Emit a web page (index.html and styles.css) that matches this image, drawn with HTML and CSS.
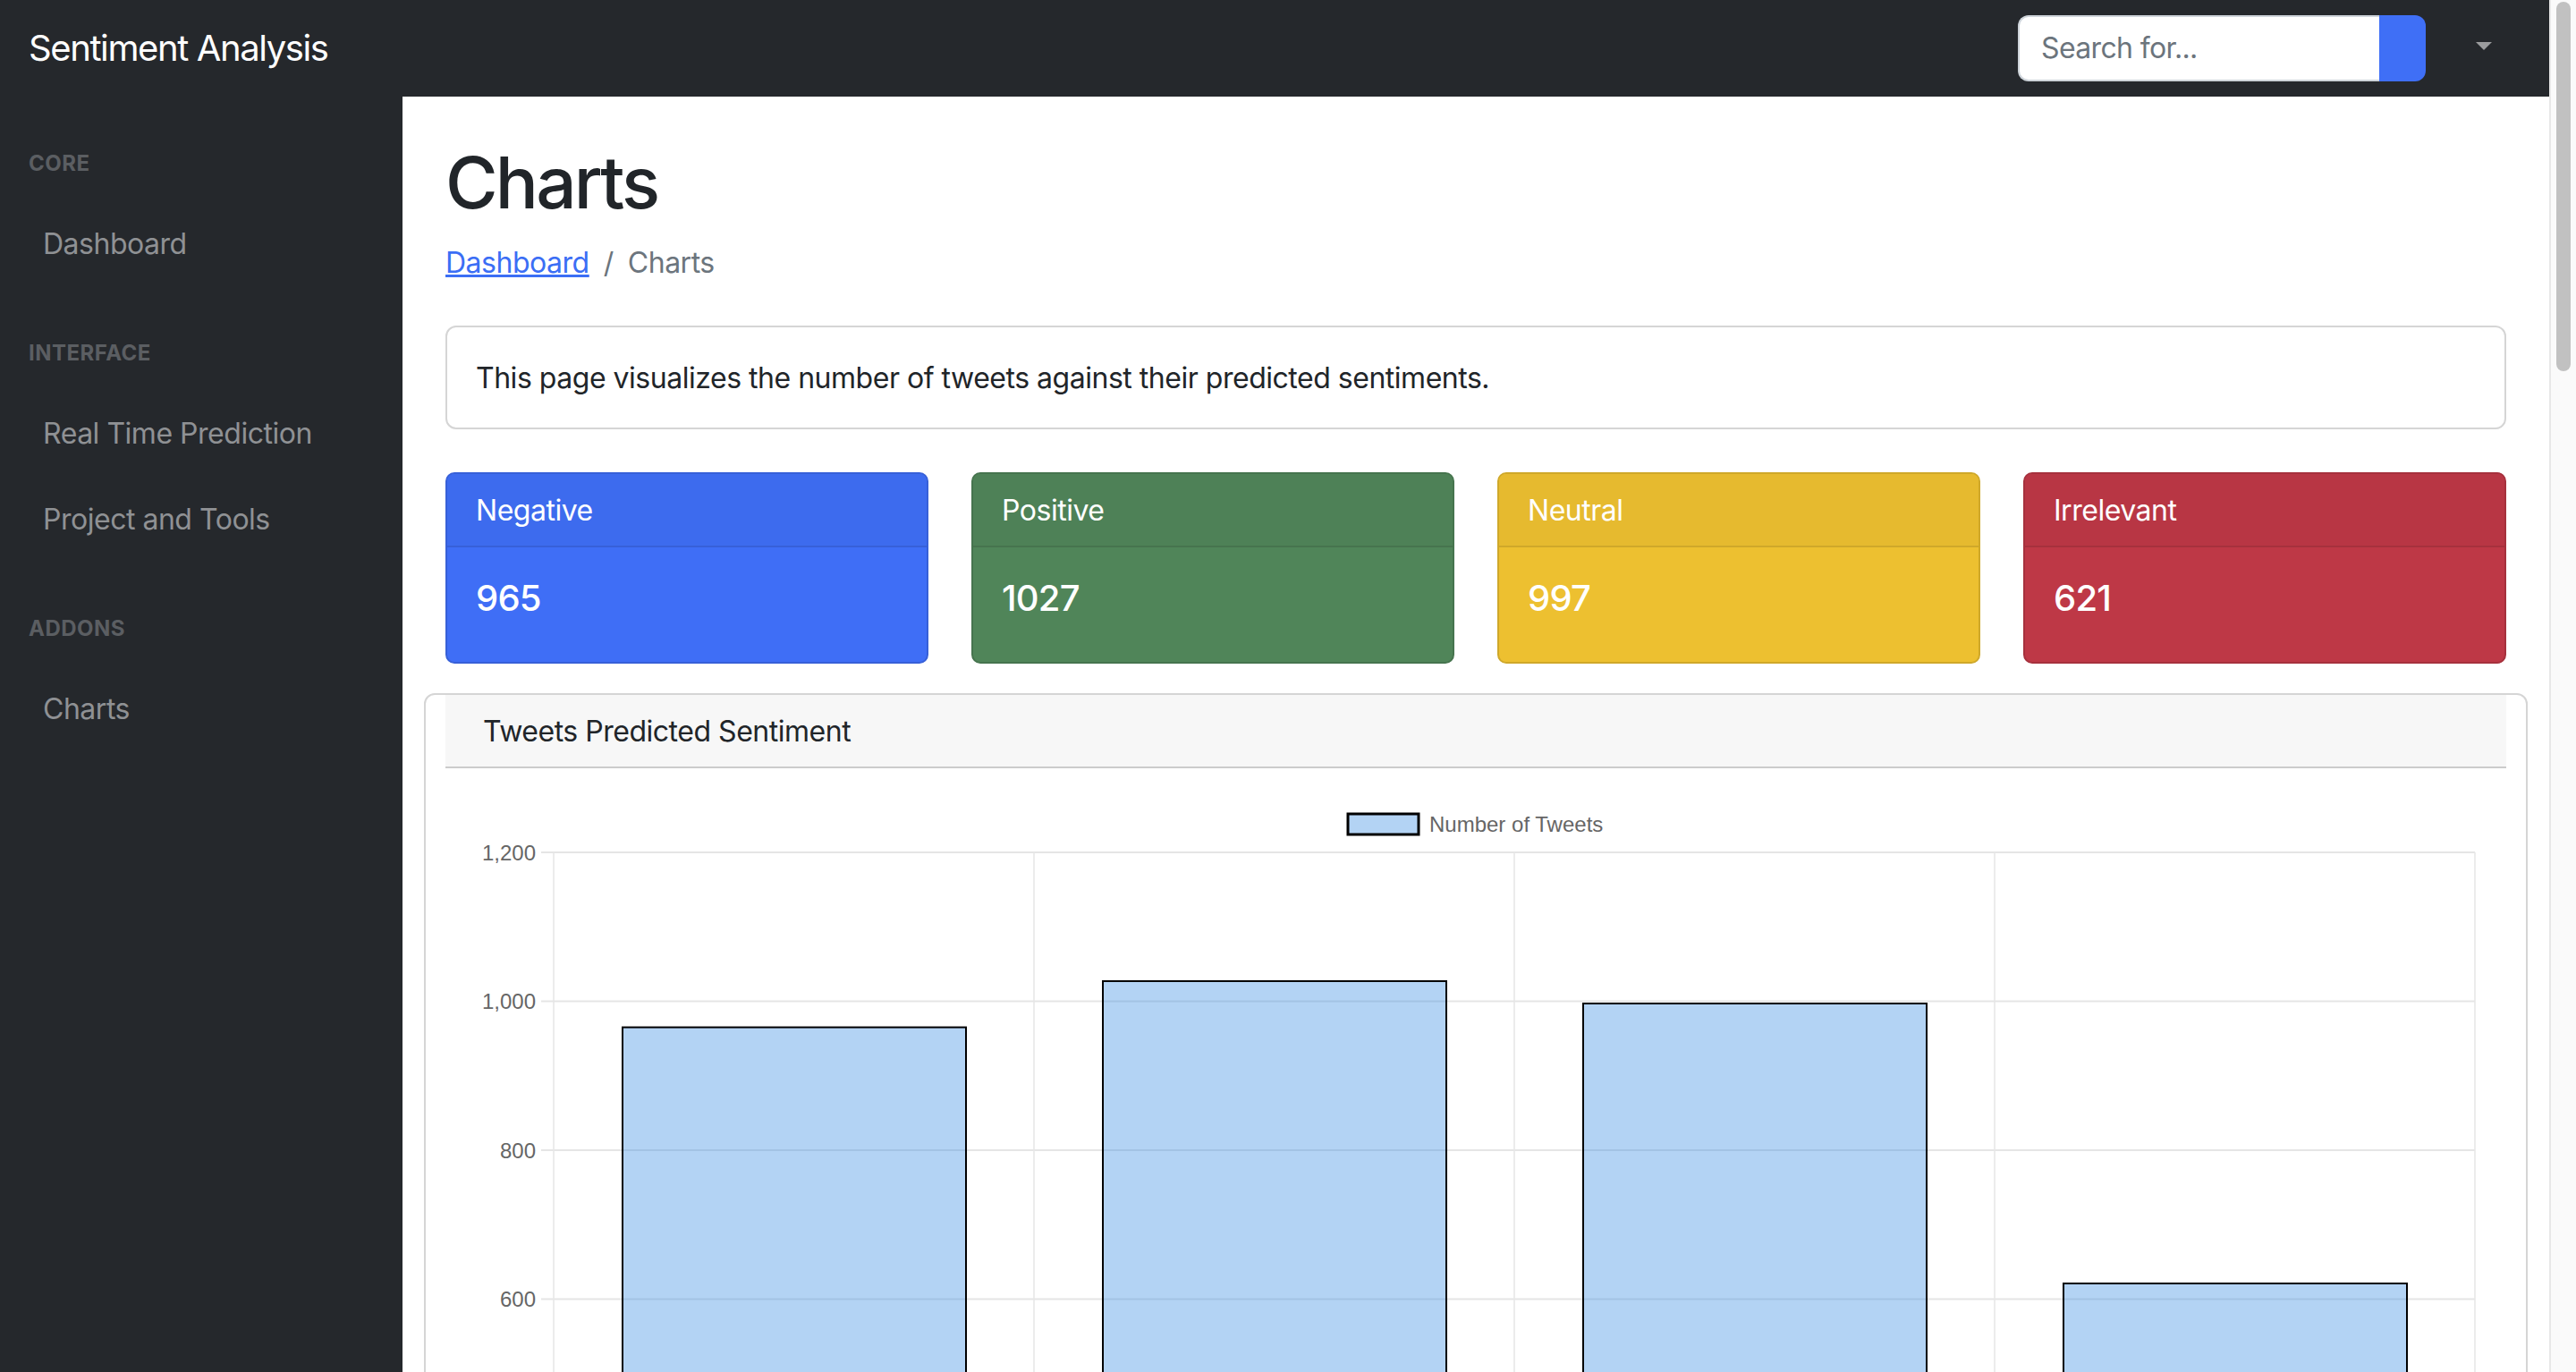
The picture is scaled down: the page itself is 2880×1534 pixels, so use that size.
FILE: index.html
```html
<!DOCTYPE html>
<html lang="en">
<head>
<meta charset="utf-8">
<title>Charts - Sentiment Analysis</title>
<link rel="stylesheet" href="styles.css">
</head>
<body>
<div class="page">
  <nav class="topnav">
    <a class="brand" href="#">Sentiment Analysis</a>
    <form class="search">
      <input class="search-input" type="text" placeholder="Search for...">
      <button class="search-btn" type="button" aria-label="Search"></button>
    </form>
    <a class="user-toggle" href="#" aria-label="User menu"><span class="caret"></span></a>
  </nav>
  <div class="layout">
    <nav class="sidenav">
      <div class="menu-heading">Core</div>
      <a class="menu-link" href="#">Dashboard</a>
      <div class="menu-heading">Interface</div>
      <a class="menu-link" href="#">Real Time Prediction</a>
      <a class="menu-link" href="#">Project and Tools</a>
      <div class="menu-heading">Addons</div>
      <a class="menu-link" href="#">Charts</a>
    </nav>
    <main class="content">
      <h1 class="title">Charts</h1>
      <ol class="breadcrumb">
        <li><a href="#">Dashboard</a></li>
        <li class="crumb-active">Charts</li>
      </ol>
      <div class="note">This page visualizes the number of tweets against their predicted sentiments.</div>
      <div class="stats">
        <div class="stat stat-negative">
          <div class="stat-header">Negative</div>
          <div class="stat-body"><h5 class="stat-value">965</h5></div>
        </div>
        <div class="stat stat-positive">
          <div class="stat-header">Positive</div>
          <div class="stat-body"><h5 class="stat-value">1027</h5></div>
        </div>
        <div class="stat stat-neutral">
          <div class="stat-header">Neutral</div>
          <div class="stat-body"><h5 class="stat-value">997</h5></div>
        </div>
        <div class="stat stat-irrelevant">
          <div class="stat-header">Irrelevant</div>
          <div class="stat-body"><h5 class="stat-value">621</h5></div>
        </div>
      </div>
      <div class="chart-card">
        <div class="chart-header">Tweets Predicted Sentiment</div>
        <div class="chart-body">
          <svg class="chart" width="2284" height="1080" viewBox="0 0 2284 1080">
            <g class="legend">
              <rect x="999" y="19" width="79" height="23" fill="rgba(54,140,225,0.38)" stroke="#000" stroke-width="3"/>
              <text class="legend-text" x="1090" y="38.5">Number of Tweets</text>
            </g>
            <g class="grid" stroke="#e5e5e5" stroke-width="2">
              <line x1="97" y1="62" x2="2259" y2="62"/>
              <line x1="97" y1="228.5" x2="2259" y2="228.5"/>
              <line x1="97" y1="395" x2="2259" y2="395"/>
              <line x1="97" y1="561.5" x2="2259" y2="561.5"/>
              <line x1="97" y1="728" x2="2259" y2="728"/>
              <line x1="97" y1="894.5" x2="2259" y2="894.5"/>
              <line x1="97" y1="1061" x2="2259" y2="1061"/>
            </g>
            <g class="grid-v" stroke="#e6e6e6" stroke-width="1.5">
              <line x1="111" y1="62" x2="111" y2="1075"/>
              <line x1="648" y1="62" x2="648" y2="1075"/>
              <line x1="1185" y1="62" x2="1185" y2="1075"/>
              <line x1="1722" y1="62" x2="1722" y2="1075"/>
              <line x1="2259" y1="62" x2="2259" y2="1075"/>
            </g>
            <g class="ylabels">
              <text x="91" y="70.5">1,200</text>
              <text x="91" y="237">1,000</text>
              <text x="91" y="403.5">800</text>
              <text x="91" y="570">600</text>
            </g>
            <g class="bars" fill="rgba(54,140,225,0.38)" stroke="#000" stroke-width="2">
              <rect x="188" y="257.6" width="384" height="803.4"/>
              <rect x="725" y="206" width="384" height="855"/>
              <rect x="1262" y="231" width="384" height="830"/>
              <rect x="1799" y="544" width="384" height="517"/>
            </g>
          </svg>
        </div>
      </div>
    </main>
  </div>
</div>
<div class="scrollbar"><div class="thumb"></div></div>
</body>
</html>
```

FILE: styles.css
```css
html, body {
  margin: 0;
  padding: 0;
  height: 100%;
  overflow: hidden;
}

body {
  display: flex;
  width: 2880px;
  height: 1534px;
  font-family: Inter, "Noto Sans", "Liberation Sans", sans-serif;
  letter-spacing: -0.03em;
  color: #212529;
  background: #fff;
}

.page {
  flex: 0 0 2850px;
  display: flex;
  flex-direction: column;
  height: 1534px;
  overflow: hidden;
}

/* Top navbar */
.topnav {
  flex: 0 0 108px;
  background: #25282c;
  display: flex;
  align-items: center;
}

.brand {
  padding-left: 32px;
  font-size: 40px;
  line-height: 1;
  letter-spacing: -0.035em;
  color: #fff;
  text-decoration: none;
}

.search {
  margin: 0 0 0 auto;
  display: flex;
  width: 456px;
  height: 74px;
}

.search-input {
  flex: 1;
  min-width: 0;
  box-sizing: border-box;
  height: 74px;
  border: 2px solid #ced4da;
  border-right: none;
  border-radius: 12px 0 0 12px;
  padding: 0 24px 2px;
  font-family: Inter, "Noto Sans", sans-serif;
  font-size: 32px;
  letter-spacing: -0.02em;
  color: #212529;
  background: #fff;
  outline: none;
}

.search-input::placeholder {
  color: #6c757d;
}

.search-btn {
  width: 52px;
  height: 74px;
  border: none;
  padding: 0;
  background: #3f6ff6;
  border-radius: 0 12px 12px 0;
}

.user-toggle {
  margin: 0 64px 5px 56px;
  display: flex;
}

.caret {
  width: 0;
  height: 0;
  border-left: 9.5px solid transparent;
  border-right: 9.5px solid transparent;
  border-top: 9.5px solid #9b9c9e;
}

/* Layout */
.layout {
  flex: 1;
  display: flex;
  min-height: 0;
}

.sidenav {
  flex: 0 0 450px;
  background: #25282c;
  display: flex;
  flex-direction: column;
}

.menu-heading {
  padding: 57px 32px 23px;
  font-size: 24px;
  line-height: 36px;
  font-weight: 700;
  letter-spacing: 0.02em;
  text-transform: uppercase;
  color: #5b5e62;
}

.menu-link {
  padding: 25px 32px 23px 48px;
  font-size: 32px;
  line-height: 48px;
  color: #8f9194;
  text-decoration: none;
}

/* Main content */
.content {
  flex: 1;
  padding: 0 48px;
  min-width: 0;
}

.title {
  margin: 48px 0 16px;
  font-size: 80px;
  font-weight: 500;
  line-height: 96px;
  letter-spacing: -0.035em;
}

.breadcrumb {
  list-style: none;
  margin: 0 0 46px;
  padding: 2px 0 0;
  display: flex;
  font-size: 32px;
  line-height: 48px;
}

.breadcrumb li + li::before {
  content: "/";
  padding: 0 16px;
  color: #6c757d;
}

.breadcrumb a {
  color: #3b6ef5;
  text-decoration: underline;
}

.crumb-active {
  color: #6c757d;
}

.note {
  border: 2px solid #d5d5d5;
  border-radius: 12px;
  padding: 33px 32px 31px;
  font-size: 32px;
  line-height: 48px;
  margin-bottom: 48px;
}

/* Stat cards */
.stats {
  display: grid;
  grid-template-columns: repeat(4, 1fr);
  gap: 48px;
}

.stat {
  border: 2px solid;
  border-radius: 10px;
  color: #fff;
  overflow: hidden;
}

.stat-header {
  padding: 17px 32px 15px;
  font-size: 32px;
  line-height: 48px;
  border-bottom: 2px solid;
}

.stat-body {
  padding: 33px 32px 31px;
}

.stat-value {
  margin: 0 0 16px;
  font-size: 40px;
  font-weight: 500;
  line-height: 48px;
  letter-spacing: -0.02em;
}

.stat-negative { background: #3f6ef6; border-color: #3760d8; }
.stat-negative .stat-header { background: #3d6bee; border-color: #3760d8; }

.stat-positive { background: #508559; border-color: #46744e; }
.stat-positive .stat-header { background: #4e8157; border-color: #46744e; }

.stat-neutral { background: #edc030; border-color: #cfa82a; }
.stat-neutral .stat-header { background: #e6ba2f; border-color: #cfa82a; }

.stat-irrelevant { background: #be3846; border-color: #a6313d; }
.stat-irrelevant .stat-header { background: #b83644; border-color: #a6313d; }

/* Chart card */
.chart-card {
  margin: 33px -24px 0;
  border: 2px solid #d5d5d5;
  border-radius: 12px;
}

.chart-header {
  margin: 0 22px;
  padding: 17px 32px 15px 42px;
  background: #f7f7f7;
  border-bottom: 2px solid #cccccc;
  font-size: 32px;
  line-height: 48px;
}

.chart-body {
  padding: 32px;
}

.chart {
  display: block;
}

.chart text {
  font-family: "Liberation Sans", Arial, sans-serif;
  font-size: 24px;
  letter-spacing: 0;
  fill: #666;
}

.ylabels text {
  text-anchor: end;
}

/* Fake page scrollbar */
.scrollbar {
  flex: 0 0 30px;
  box-sizing: border-box;
  height: 1534px;
  border-left: 2px solid #e8e8e8;
  background: #fafafa;
  padding: 2px 0 0 6px;
}

.thumb {
  width: 16px;
  height: 413px;
  border-radius: 8px;
  background: #c1c1c1;
}
```
